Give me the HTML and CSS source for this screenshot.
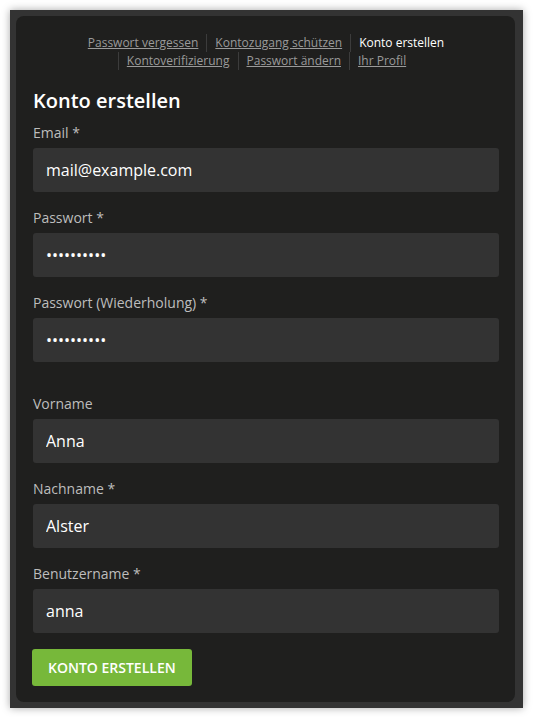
FILE: index.html
```html
<!DOCTYPE html>
<html lang="de">
<head>
<meta charset="utf-8">
<title>Konto erstellen</title>
<link rel="stylesheet" href="styles.css">
</head>
<body>
<div class="frame">
  <div class="panel">
    <nav class="nav">
      <a class="nav-item" href="#">Passwort vergessen</a>
      <a class="nav-item" href="#">Kontozugang schützen</a>
      <span class="nav-item active">Konto erstellen</span>
      <span class="break"></span>
      <a class="nav-item sep" href="#">Kontoverifizierung</a>
      <a class="nav-item" href="#">Passwort ändern</a>
      <a class="nav-item" href="#">Ihr Profil</a>
    </nav>
    <h1 class="title">Konto erstellen</h1>
    <form class="form">
      <div class="field">
        <label class="label">Email *</label>
        <input class="input" type="text" value="mail@example.com">
      </div>
      <div class="field">
        <label class="label">Passwort *</label>
        <input class="input" type="password" value="abcdefghij">
      </div>
      <div class="field">
        <label class="label">Passwort (Wiederholung) *</label>
        <input class="input" type="password" value="abcdefghij">
      </div>
      <div class="field group-start">
        <label class="label">Vorname</label>
        <input class="input" type="text" value="Anna">
      </div>
      <div class="field">
        <label class="label">Nachname *</label>
        <input class="input" type="text" value="Alster">
      </div>
      <div class="field">
        <label class="label">Benutzername *</label>
        <input class="input" type="text" value="anna">
      </div>
      <div class="actions">
        <button class="btn" type="button">Konto erstellen</button>
      </div>
    </form>
  </div>
</div>
</body>
</html>
```
FILE: styles.css
```css
* { box-sizing: border-box; }
html, body { margin: 0; padding: 0; background: #ffffff; }
body {
  font-family: "Open Sans", "Liberation Sans", sans-serif;
  padding: 10px;
  width: 533px;
  height: 717px;
}
.frame {
  width: 513px;
  height: 698px;
  background: #333333;
  padding: 6px 8px 6px 6px;
  box-shadow: 0 0 8px rgba(0,0,0,0.35);
}
.panel {
  background: #1f1f1e;
  border-radius: 8px;
  height: 100%;
  padding: 17px 16px 0 17px;
}
.nav {
  display: flex;
  flex-wrap: wrap;
  justify-content: center;
  font-size: 12px;
  line-height: 18px;
  padding-top: 1px;
}
.nav-item {
  color: #9a9a9a;
  text-decoration: underline;
  padding: 0 8px;
  border-left: 1px solid #3c3c3c;
}
.nav-item:first-child { border-left: none; }
.nav-item.active { color: #ffffff; text-decoration: none; }
.break { flex-basis: 100%; height: 0; }
.title {
  margin: 18px 0 9px;
  font-size: 20px;
  line-height: 26px;
  font-weight: 600;
  color: #ffffff;
}
.form { display: flex; flex-direction: column; }
.field { display: flex; flex-direction: column; margin-bottom: 16px; }
.field.group-start { margin-top: 16px; }
.label {
  font-size: 14px;
  line-height: 20px;
  color: #bdbdbd;
  margin-bottom: 5px;
}
.input {
  height: 44px;
  background: #333333;
  border: none;
  border-radius: 3px;
  padding: 0 13px;
  font-family: inherit;
  font-size: 16px;
  color: #ffffff;
  outline: none;
}
.actions { display: flex; }
.btn {
  margin-left: -1px;
  height: 37px;
  padding: 0 16px;
  background: #77b83a;
  border: none;
  border-radius: 3px;
  color: #ffffff;
  font-family: inherit;
  font-size: 14px;
  font-weight: 600;
  text-transform: uppercase;
}
```
